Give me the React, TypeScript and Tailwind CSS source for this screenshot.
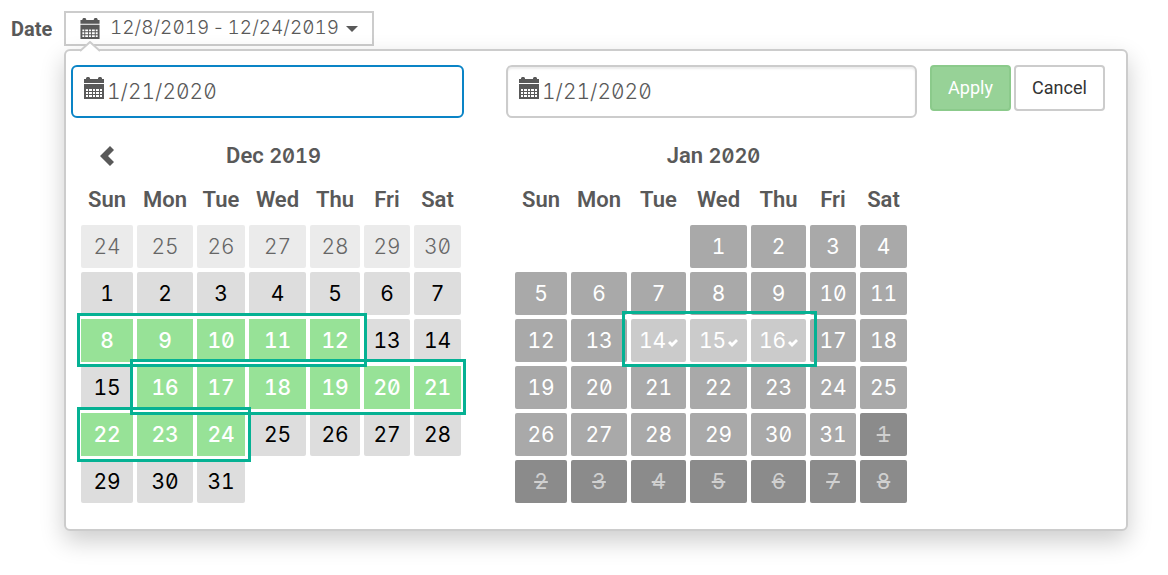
import React, { useState } from "react";

type DayStatus = "outside" | "open" | "selected" | "busy" | "checked" | "disabled";

interface Day {
  label: string;
  status: DayStatus;
}

interface MonthProps {
  month: string;
  year: string;
  widths: number[];
  weeks: (Day | null)[][];
  hasPrevious?: boolean;
  children?: React.ReactNode;
}

const weekDays = ["Sun", "Mon", "Tue", "Wed", "Thu", "Fri", "Sat"];

const statusStyles: Record<DayStatus, string> = {
  outside: "rounded-xs bg-[#ebebeb] font-light text-[#666]",
  open: "rounded-xs bg-[#ddd] text-black",
  selected: "bg-[#97e297] font-medium text-white",
  busy: "rounded-xs bg-[#a9a9a9] text-white",
  checked: "rounded-xs bg-[#cbcbcb] text-white",
  disabled: "rounded-xs bg-[#8b8b8b] text-[#d0d0d0] line-through",
};

const range = (from: number, to: number, status: DayStatus): Day[] =>
  Array.from({ length: to - from + 1 }, (_, i) => ({ label: String(from + i), status }));

// Split a flat list of days into rows of seven
const toWeeks = (days: (Day | null)[]) => {
  const weeks: (Day | null)[][] = [];
  for (let i = 0; i < days.length; i += 7) {
    weeks.push(days.slice(i, i + 7));
  }
  return weeks;
};

const december = toWeeks([
  ...range(24, 30, "outside"),
  ...range(1, 7, "open"),
  ...range(8, 12, "selected"),
  ...range(13, 15, "open"),
  ...range(16, 24, "selected"),
  ...range(25, 31, "open"),
]);

const january = toWeeks([
  null,
  null,
  null,
  ...range(1, 13, "busy"),
  ...range(14, 16, "checked"),
  ...range(17, 31, "busy"),
  ...range(1, 8, "disabled"),
]);

const CalendarIcon = ({ className }: { className: string }) => (
  <svg viewBox="0 0 20 22" className={className} fill="currentColor" aria-hidden="true">
    <path d="M0 2h2V1l1-1h2l1 1v1h8V1l1-1h2l1 1v1h2v4H0z" />
    <path
      fillRule="evenodd"
      d="M0 7h20v15H0zM2 12v2h2v-2zM5 12v2h3v-2zM9 12v2h2v-2zM12 12v2h3v-2zM16 12v2h2v-2zM2 15v2h2v-2zM5 15v2h3v-2zM9 15v2h2v-2zM12 15v2h3v-2zM16 15v2h2v-2zM2 18v2h2v-2zM5 18v2h3v-2zM9 18v2h2v-2zM12 18v2h3v-2zM16 18v2h2v-2z"
    />
  </svg>
);

const CheckIcon = () => (
  <svg viewBox="0 0 10 8" className="mt-1 h-2 w-2.5" aria-hidden="true">
    <path d="M0 4l2-2 2 2 4-4 2 2-6 6z" fill="currentColor" />
  </svg>
);

const Month = ({ month, year, widths, weeks, hasPrevious, children }: MonthProps) => (
  <div className="relative w-max">
    <table className="border-separate border-spacing-1 text-center text-[22px] leading-6">
      <thead>
        <tr className="h-10">
          <th className="p-0 pt-1">
            {hasPrevious && (
              <button type="button" aria-label="Previous month" className="block w-full">
                <svg viewBox="0 0 14 20" className="mx-auto h-5 w-3.5" aria-hidden="true">
                  <path d="M10 0l4 4-6 6 6 6-4 4L0 10z" fill="currentColor" />
                </svg>
              </button>
            )}
          </th>
          <th colSpan={5} className="p-0 pt-1 font-semibold">
            {month} <span className="font-[Inter] text-[20px] tabular-nums slashed-zero">{year}</span>
          </th>
          <th />
        </tr>
        <tr className="h-[43px]">
          {weekDays.map((name, i) => (
            <th key={name} className="p-0 font-semibold" style={{ width: widths[i] }}>
              {name}
            </th>
          ))}
        </tr>
      </thead>
      <tbody className="font-[Inter] text-[21px] tabular-nums slashed-zero">
        {weeks.map((week, row) => (
          <tr key={row}>
            {week.map((day, i) => (
              <td key={i} className="p-0">
                {day && (
                  <button
                    type="button"
                    disabled={day.status === "disabled"}
                    className={`flex h-[43px] w-full items-center justify-center gap-0.5 ${statusStyles[day.status]}`}
                  >
                    {day.label}
                    {day.status === "checked" && <CheckIcon />}
                  </button>
                )}
              </td>
            ))}
          </tr>
        ))}
      </tbody>
    </table>
    {children}
  </div>
);

interface DateFieldProps {
  label: string;
  value: string;
  onChange: (value: string) => void;
  className: string;
}

const DateField = ({ label, value, onChange, className }: DateFieldProps) => (
  <div className={`flex h-[53px] items-center rounded-md border-2 px-[11px] ${className}`}>
    <CalendarIcon className="mb-2 h-[22px] w-5 shrink-0" />
    <input
      type="text"
      aria-label={label}
      value={value}
      onChange={(e) => onChange(e.target.value)}
      className="ml-[3px] w-full min-w-0 bg-transparent font-[Inter] text-[21px] font-light tabular-nums slashed-zero outline-none"
    />
  </div>
);

const App = () => {
  const [start, setStart] = useState("1/21/2020");
  const [end, setEnd] = useState("1/21/2020");

  return (
    <div className="bg-white pt-[11px] pr-10 pb-11 pl-[11px] font-[Roboto,sans-serif] text-[#595959]">
      <div className="flex items-center">
        <label htmlFor="date-range" className="w-[53px] text-xl font-bold">
          Date
        </label>
        <button
          id="date-range"
          type="button"
          className="flex h-[35px] w-[310px] items-center border-2 border-[#ccc] px-3.5 font-[Inter] text-[19px] font-light tabular-nums slashed-zero"
        >
          <CalendarIcon className="h-[21px] w-5 shrink-0" />
          <span className="ml-2.5 flex gap-[3px] whitespace-nowrap">
            <span>12/8/2019</span>
            <span>-</span>
            <span>12/24/2019</span>
          </span>
          <svg viewBox="0 0 12 6" className="ml-[7px] h-1.5 w-3 shrink-0" aria-hidden="true">
            <path d="M0 0h12L6 6z" fill="currentColor" />
          </svg>
        </button>
      </div>

      <div className="relative mt-[3px] ml-[53px] rounded-md border-2 border-[#ccc] bg-white px-[5px] pt-3.5 pb-[22px] shadow-[0_10px_24px_rgba(0,0,0,0.2)]">
        <svg viewBox="0 0 20 11" className="absolute -top-[10px] left-3.5 h-[11px] w-5" aria-hidden="true">
          <path d="M0 10L10 0l10 10v1H0z" fill="#fff" />
          <path d="M0 10L10 1l10 9" fill="none" stroke="#ccc" strokeWidth="2" />
        </svg>

        <div className="flex items-start">
          <div className="w-[393px] shrink-0">
            <DateField label="Start date" value={start} onChange={setStart} className="border-[#0a84c6]" />
            <div className="mt-3 pl-1.5">
              <Month month="Dec" year="2019" widths={[52, 56, 48, 57, 50, 46, 47]} weeks={december} hasPrevious>
                <div className="pointer-events-none absolute top-[183px] left-0 h-[54px] w-[290px] border-3 border-[#05b193]" />
                <div className="pointer-events-none absolute top-[229px] left-[53px] h-14 w-[336px] border-3 border-[#05b193]" />
                <div className="pointer-events-none absolute top-[277px] left-0 h-[55px] w-[174px] border-3 border-[#05b193]" />
              </Month>
            </div>
          </div>

          <div className="ml-[42px] w-[411px] shrink-0">
            <DateField
              label="End date"
              value={end}
              onChange={setEnd}
              className="border-[#ccc] shadow-[inset_0_2px_2px_rgba(0,0,0,0.08)]"
            />
            <div className="mt-3 pl-[5px]">
              <Month month="Jan" year="2020" widths={[52, 56, 55, 57, 55, 46, 47]} weeks={january}>
                <div className="pointer-events-none absolute top-[181px] left-[111px] h-14 w-[195px] border-3 border-[#05b193]" />
              </Month>
            </div>
          </div>

          <div className="ml-[13px] flex gap-[3px] text-lg">
            <button type="button" className="h-[46px] w-[81px] rounded-sm border-2 border-[#8bca8b] bg-[#97d297] text-white">
              Apply
            </button>
            <button type="button" className="h-[46px] w-[91px] rounded-sm border-2 border-[#ccc] bg-white text-[#333]">
              Cancel
            </button>
          </div>
        </div>
      </div>
    </div>
  );
};

export default App;
